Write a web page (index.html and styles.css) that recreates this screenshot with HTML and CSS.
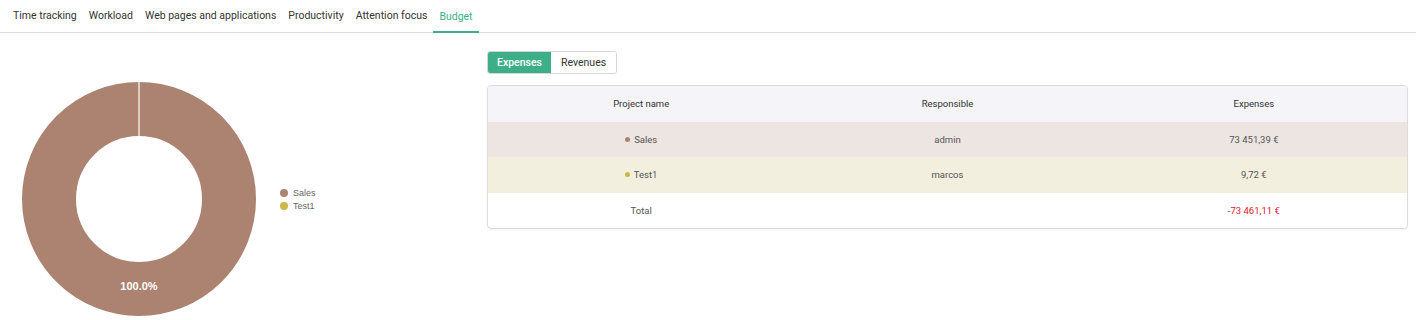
FILE: index.html
```html
<!DOCTYPE html>
<html lang="en">
<head>
  <meta charset="UTF-8" />
  <title>Budget</title>
  <link rel="stylesheet" href="styles.css">
</head>
<body>
  <nav class="tabs">
    <a class="tab">Time tracking</a>
    <a class="tab">Workload</a>
    <a class="tab">Web pages and applications</a>
    <a class="tab">Productivity</a>
    <a class="tab">Attention focus</a>
    <a class="tab active">Budget</a>
  </nav>

  <main class="content">
    <section class="chart-panel">
      <svg class="donut" width="234" height="234" viewBox="0 0 234 234">
        <circle cx="117" cy="117" r="90" fill="none" stroke="#ab8370" stroke-width="54" />
        <line x1="117" y1="0" x2="117" y2="54" stroke="#fff" stroke-width="1.2" />
        <text x="117" y="208" text-anchor="middle" class="donut-label">100.0%</text>
      </svg>
      <ul class="legend">
        <li><span class="dot sales"></span>Sales</li>
        <li><span class="dot test"></span>Test1</li>
      </ul>
    </section>

    <section class="table-panel">
      <div class="switch">
        <button class="switch-btn active">Expenses</button>
        <button class="switch-btn">Revenues</button>
      </div>
      <div class="table-card">
        <table>
          <thead>
            <tr><th>Project name</th><th>Responsible</th><th>Expenses</th></tr>
          </thead>
          <tbody>
            <tr class="row-sales"><td><span class="mini-dot sales"></span>Sales</td><td>admin</td><td>73 451,39 €</td></tr>
            <tr class="row-test"><td><span class="mini-dot test"></span>Test1</td><td>marcos</td><td>9,72 €</td></tr>
            <tr><td>Total</td><td></td><td class="negative">-73 461,11 €</td></tr>
          </tbody>
        </table>
      </div>
    </section>
  </main>
</body>
</html>
```

FILE: styles.css
```css
body {
  margin: 0;
  background: #fff;
  font-family: Roboto, "Liberation Sans", sans-serif;
  color: #333;
}

.tabs {
  display: flex;
  padding: 0 0 0 7px;
  height: 32px;
  border-bottom: 1px solid #dcdcdc;
}

.tab {
  display: flex;
  align-items: center;
  padding: 1px 6px 0;
  font-size: 10.5px;
  color: #333;
  box-sizing: border-box;
  border-bottom: 2px solid transparent;
}

.tab.active {
  color: #3daf88;
  border-bottom-color: #3daf88;
  margin-bottom: -1px;
}

.content {
  display: flex;
  padding-right: 8px;
}

.chart-panel {
  width: 487px;
  flex-shrink: 0;
  display: flex;
  padding-top: 49px;
}

.donut {
  margin-left: 22px;
  display: block;
}

.donut-label {
  fill: #fff;
  font-size: 11px;
  font-weight: 700;
  font-family: "Liberation Sans", Arial, sans-serif;
}

.legend {
  list-style: none;
  margin: 1px 0 0 24px;
  padding: 0;
  align-self: center;
}

.legend li {
  display: flex;
  align-items: center;
  font-size: 9px;
  color: #666;
  font-family: "Liberation Sans", Arial, sans-serif;
  height: 13px;
}

.dot {
  width: 8px;
  height: 8px;
  border-radius: 50%;
  margin-right: 5px;
}

.sales { background: #ab8370; }
.test { background: #c9b94b; }

.table-panel {
  flex: 1;
  padding-top: 18px;
}

.switch {
  display: inline-flex;
  border: 1px solid #d6d6d6;
  border-radius: 3px;
  overflow: hidden;
  height: 23px;
  box-sizing: border-box;
}

.switch-btn {
  border: 0;
  background: #fff;
  font-family: Roboto, sans-serif;
  font-size: 10.5px;
  color: #333;
  padding: 0 10px;
  cursor: pointer;
}

.switch-btn.active {
  background: #3daf88;
  color: #fff;
  font-weight: 500;
  width: 63px;
  padding: 0;
}

.table-card {
  margin-top: 11px;
  border: 1px solid #dcdcdc;
  border-radius: 4px;
  overflow: hidden;
  box-shadow: 0 1px 2px rgba(0, 0, 0, 0.06);
}

table {
  width: 100%;
  border-collapse: collapse;
  table-layout: fixed;
  font-size: 9.5px;
}

th, td {
  height: 35.5px;
  padding: 0;
  text-align: center;
  color: #555;
}

th {
  background: #f4f4f9;
  font-weight: 400;
  color: #333;
}

.row-sales td { background: #ede5e2; }
.row-test td { background: #f2efdf; }

.mini-dot {
  display: inline-block;
  width: 5px;
  height: 5px;
  border-radius: 50%;
  margin-right: 4px;
  vertical-align: 1px;
}

.negative { color: #e0202c; }
```
